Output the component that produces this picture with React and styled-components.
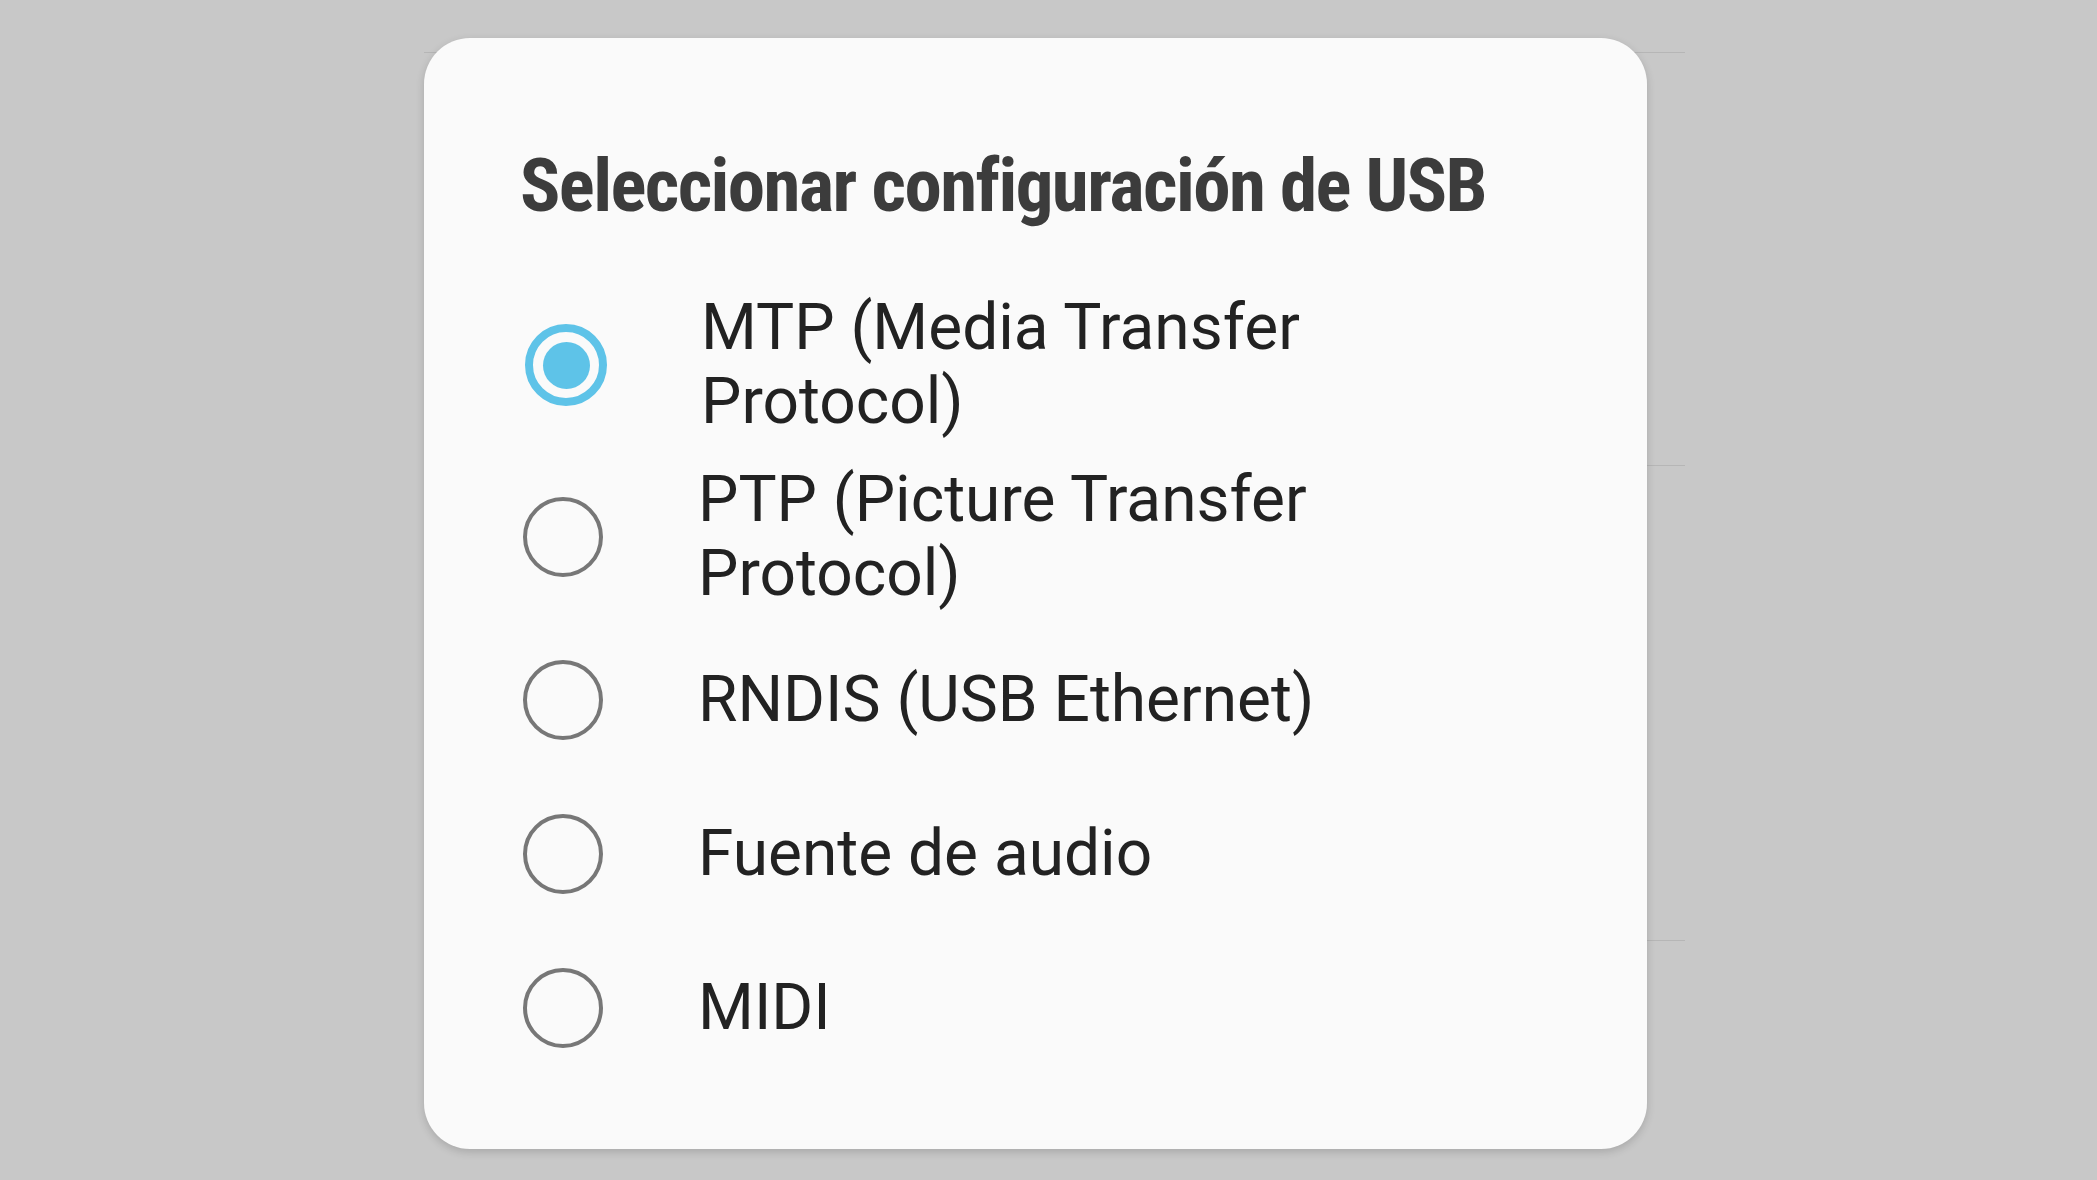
import React, { useState } from 'react'
import styled, { createGlobalStyle } from 'styled-components';

const GlobalStyle = createGlobalStyle`
    html, body {
        margin: 0;
        padding: 0;
        background: #c8c8c8;
    }
    body {
        width: 2097px;
        height: 1180px;
        overflow: hidden;
        font-family: Roboto, "Noto Sans", "Liberation Sans", sans-serif;
    }
`;

const options = [
    { id: 'mtp', label: 'MTP (Media Transfer Protocol)' },
    { id: 'ptp', label: 'PTP (Picture Transfer Protocol)' },
    { id: 'rndis', label: 'RNDIS (USB Ethernet)' },
    { id: 'audio', label: 'Fuente de audio' },
    { id: 'midi', label: 'MIDI' },
];

// list of the settings screen that sits behind the dim
const backgroundRows = [52, 412, 474];

const App = () => {
    const [selected, setSelected] = useState('mtp');

    return (
        <Screen>
            <GlobalStyle />
            <BackList>
                {backgroundRows.map((h, i) => (
                    <BackRow key={i} $height={h} />
                ))}
            </BackList>

            <Dialog role="dialog" aria-labelledby="usb-title">
                <Title id="usb-title">Seleccionar configuración de USB</Title>
                <OptionList>
                    {options.map((opt) => (
                        <Option key={opt.id} onClick={() => setSelected(opt.id)}>
                            <Radio $checked={selected === opt.id}>
                                {selected === opt.id && <Dot />}
                            </Radio>
                            <Label>{opt.label}</Label>
                        </Option>
                    ))}
                </OptionList>
            </Dialog>
        </Screen>
    )
}

export default App;

const Screen = styled.div`
    position: relative;
    width: 2097px;
    height: 1180px;
    background: #c8c8c8;
`;

const BackList = styled.div`
    display: flex;
    flex-direction: column;
    margin-left: 424px;
    width: 1261px;
`;

const BackRow = styled.div`
    height: ${(p) => p.$height}px;
    border-bottom: 1px solid #b6b6b6;
`;

const Dialog = styled.section`
    position: absolute;
    left: 424px;
    top: 38px;
    width: 1223px;
    height: 1111px;
    box-sizing: border-box;
    padding: 102px 0 0 96px;
    background: #fafafa;
    border-radius: 46px;
    box-shadow: 0 3px 8px rgba(0, 0, 0, 0.16);
    display: flex;
    flex-direction: column;
`;

const Title = styled.h2`
    margin: 0;
    font-family: "Roboto Condensed", "Liberation Sans Narrow", "DejaVu Sans Condensed", Roboto, sans-serif;
    font-stretch: condensed;
    font-weight: 700;
    font-size: 75px;
    line-height: 91px;
    letter-spacing: -1.6px;
    color: #3c3c3c;
    white-space: nowrap;
`;

const OptionList = styled.div`
    display: flex;
    flex-direction: column;
    margin-top: 48px;
`;

const Option = styled.label`
    display: flex;
    align-items: center;
    min-height: 154px;
    padding: 12px 0;
    box-sizing: border-box;
    cursor: pointer;
`;

const Radio = styled.span`
    flex: none;
    display: flex;
    align-items: center;
    justify-content: center;
    box-sizing: border-box;
    width: ${(p) => (p.$checked ? 82 : 80)}px;
    height: ${(p) => (p.$checked ? 82 : 80)}px;
    margin-left: ${(p) => (p.$checked ? 5 : 3)}px;
    margin-right: ${(p) => (p.$checked ? 94 : 95)}px;
    border-radius: 50%;
    border: ${(p) => (p.$checked ? '8px solid #5ec3e8' : '4px solid #777777')};
`;

const Dot = styled.span`
    width: 47px;
    height: 47px;
    border-radius: 50%;
    background: #5ec3e8;
`;

const Label = styled.span`
    max-width: 700px;
    font-family: Roboto, "Noto Sans", "Liberation Sans", sans-serif;
    font-size: 64px;
    line-height: 74px;
    color: #222222;
`;
